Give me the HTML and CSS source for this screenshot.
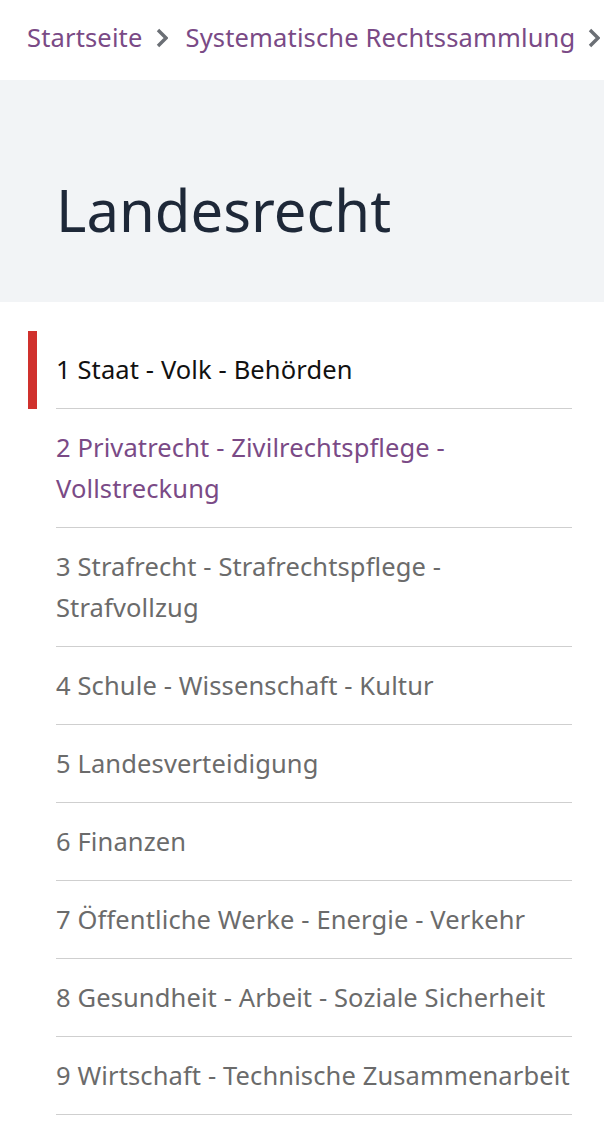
FILE: index.html
```html
<!DOCTYPE html>
<html lang="de">
<head>
    <meta charset="UTF-8">
    <link rel="stylesheet" href="styles.css">
</head>
<body>
    <nav class="breadcrumb">
        <a href="#">Startseite</a>
        <svg class="chevron" viewBox="0 0 12 20" width="12" height="20"><path d="M2 2l8 8-8 8" fill="none" stroke="currentColor" stroke-width="3.4"/></svg>
        <a href="#">Systematische Rechtssammlung</a>
        <svg class="chevron" viewBox="0 0 12 20" width="12" height="20"><path d="M2 2l8 8-8 8" fill="none" stroke="currentColor" stroke-width="3.4"/></svg>
    </nav>

    <div class="hero">
        <h1>Landesrecht</h1>
    </div>

    <ul class="chapters">
        <li class="active"><a href="#">1 Staat - Volk - Behörden</a></li>
        <li class="visited"><a href="#">2 Privatrecht - Zivilrechtspflege - Vollstreckung</a></li>
        <li><a href="#">3 Strafrecht - Strafrechtspflege - Strafvollzug</a></li>
        <li><a href="#">4 Schule - Wissenschaft - Kultur</a></li>
        <li><a href="#">5 Landesverteidigung</a></li>
        <li><a href="#">6 Finanzen</a></li>
        <li><a href="#">7 Öffentliche Werke - Energie - Verkehr</a></li>
        <li><a href="#">8 Gesundheit - Arbeit - Soziale Sicherheit</a></li>
        <li><a href="#">9 Wirtschaft - Technische Zusammenarbeit</a></li>
    </ul>
</body>
</html>
```

FILE: styles.css
```css
body {
    margin: 0;
    font-family: "Noto Sans", "Open Sans", sans-serif;
    background: #fff;
    overflow: hidden;
}

a {
    text-decoration: none;
}

.breadcrumb {
    height: 80px;
    display: flex;
    align-items: center;
    padding: 0 0 6px 27px;
    box-sizing: border-box;
    white-space: nowrap;
    font-size: 25.5px;
    letter-spacing: 0.15px;
}

.breadcrumb a {
    color: #7a4a86;
}

.chevron {
    color: #6b6f75;
    flex-shrink: 0;
    margin: 2px 18px 0 13px;
}

.hero {
    background: #f2f4f6;
    height: 222px;
    padding: 0 56px;
    display: flex;
    align-items: center;
}

.hero h1 {
    margin: 36px 0 0;
    font-size: 58px;
    font-weight: 400;
    color: #1e2838;
}

.chapters {
    list-style: none;
    margin: 29px 32px 0 56px;
    padding: 0;
}

.chapters li {
    position: relative;
    border-bottom: 1px solid #cfcfcf;
    padding: 18px 0;
    font-size: 25.5px;
    letter-spacing: 0.12px;
    line-height: 41px;
}

.chapters li a {
    color: #6b6b6b;
}

.chapters li.visited a {
    color: #7a4a86;
}

.chapters li.active a {
    color: #111;
}

.chapters li.active::before {
    content: "";
    position: absolute;
    left: -28px;
    top: 0;
    bottom: -1px;
    width: 9px;
    background: #d0312d;
}
```
